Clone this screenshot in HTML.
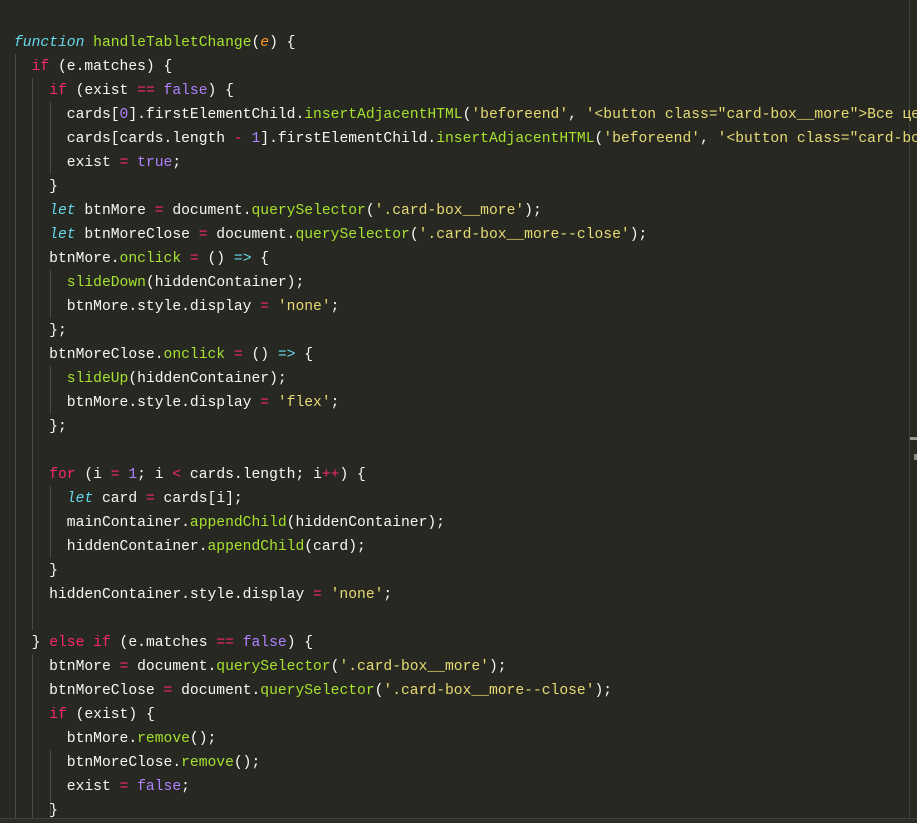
<!DOCTYPE html>
<html><head><meta charset="utf-8"><style>
html,body{margin:0;padding:0;}
body{width:917px;height:823px;background:#272822;position:relative;overflow:hidden;font-family:"Liberation Mono","DejaVu Sans Mono",monospace;font-size:14.67px;color:#f8f8f2;}
.code{position:absolute;left:14px;top:31px;width:903px;overflow:hidden;}
.l{height:24px;line-height:24px;white-space:pre;overflow:hidden;}
.g{position:absolute;width:1px;background:#4a4b44;}
.k{color:#f92672}.f{color:#a6e22e}.s{color:#e6db74}.p{color:#ae81ff}
.c{color:#66d9ef;font-style:italic}.o{color:#fd971f;font-style:italic}
</style></head><body>
<div class="g" style="left:15px;top:54px;height:769px"></div>
<div class="g" style="left:32px;top:78px;height:552px"></div>
<div class="g" style="left:32px;top:654px;height:169px"></div>
<div class="g" style="left:50px;top:102px;height:72px"></div>
<div class="g" style="left:50px;top:270px;height:48px"></div>
<div class="g" style="left:50px;top:366px;height:48px"></div>
<div class="g" style="left:50px;top:486px;height:72px"></div>
<div class="g" style="left:50px;top:750px;height:72px"></div>
<div class="g" style="left:909px;top:0;height:818px;background:#3e3f39"></div>
<div style="position:absolute;left:910px;top:437px;width:7px;height:3px;background:#9a9a95"></div>
<div style="position:absolute;left:914px;top:454px;width:3px;height:6px;background:#8a8a85"></div>
<div style="position:absolute;left:0;top:818px;width:917px;height:1px;background:#3e3f39"></div>
<div style="position:absolute;left:0;top:819px;width:917px;height:4px;background:#2c2d27"></div>
<div class="code">
<div class="l"><span class="c">function</span> <span class="f">handleTabletChange</span>(<span class="o">e</span>) {</div>
<div class="l">  <span class="k">if</span> (e.matches) {</div>
<div class="l">    <span class="k">if</span> (exist <span class="k">==</span> <span class="p">false</span>) {</div>
<div class="l">      cards[<span class="p">0</span>].firstElementChild.<span class="f">insertAdjacentHTML</span>(<span class="s">'beforeend'</span>, <span class="s">'&lt;button class="card-box__more"&gt;Все цени'</span></div>
<div class="l">      cards[cards.length <span class="k">-</span> <span class="p">1</span>].firstElementChild.<span class="f">insertAdjacentHTML</span>(<span class="s">'beforeend'</span>, <span class="s">'&lt;button class="card-box__more--close"'</span></div>
<div class="l">      exist <span class="k">=</span> <span class="p">true</span>;</div>
<div class="l">    }</div>
<div class="l">    <span class="c">let</span> btnMore <span class="k">=</span> document.<span class="f">querySelector</span>(<span class="s">'.card-box__more'</span>);</div>
<div class="l">    <span class="c">let</span> btnMoreClose <span class="k">=</span> document.<span class="f">querySelector</span>(<span class="s">'.card-box__more--close'</span>);</div>
<div class="l">    btnMore.<span class="f">onclick</span> <span class="k">=</span> () <span class="c" style="font-style:normal">=&gt;</span> {</div>
<div class="l">      <span class="f">slideDown</span>(hiddenContainer);</div>
<div class="l">      btnMore.style.display <span class="k">=</span> <span class="s">'none'</span>;</div>
<div class="l">    };</div>
<div class="l">    btnMoreClose.<span class="f">onclick</span> <span class="k">=</span> () <span class="c" style="font-style:normal">=&gt;</span> {</div>
<div class="l">      <span class="f">slideUp</span>(hiddenContainer);</div>
<div class="l">      btnMore.style.display <span class="k">=</span> <span class="s">'flex'</span>;</div>
<div class="l">    };</div>
<div class="l"> </div>
<div class="l">    <span class="k">for</span> (i <span class="k">=</span> <span class="p">1</span>; i <span class="k">&lt;</span> cards.length; i<span class="k">++</span>) {</div>
<div class="l">      <span class="c">let</span> card <span class="k">=</span> cards[i];</div>
<div class="l">      mainContainer.<span class="f">appendChild</span>(hiddenContainer);</div>
<div class="l">      hiddenContainer.<span class="f">appendChild</span>(card);</div>
<div class="l">    }</div>
<div class="l">    hiddenContainer.style.display <span class="k">=</span> <span class="s">'none'</span>;</div>
<div class="l"> </div>
<div class="l">  } <span class="k">else</span> <span class="k">if</span> (e.matches <span class="k">==</span> <span class="p">false</span>) {</div>
<div class="l">    btnMore <span class="k">=</span> document.<span class="f">querySelector</span>(<span class="s">'.card-box__more'</span>);</div>
<div class="l">    btnMoreClose <span class="k">=</span> document.<span class="f">querySelector</span>(<span class="s">'.card-box__more--close'</span>);</div>
<div class="l">    <span class="k">if</span> (exist) {</div>
<div class="l">      btnMore.<span class="f">remove</span>();</div>
<div class="l">      btnMoreClose.<span class="f">remove</span>();</div>
<div class="l">      exist <span class="k">=</span> <span class="p">false</span>;</div>
<div class="l">    }</div>
</div>
</body></html>
